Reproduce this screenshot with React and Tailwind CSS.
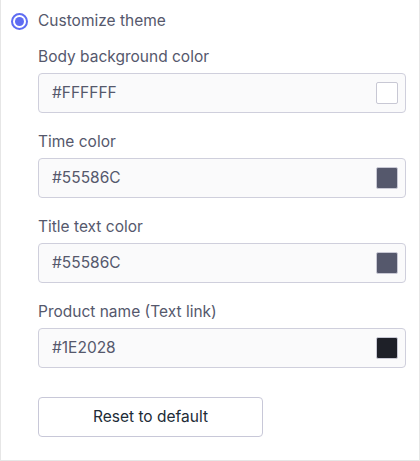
const fields = [
  { label: 'Body background color', value: '#FFFFFF', swatch: 'bg-[#FFFFFF]' },
  { label: 'Time color', value: '#55586C', swatch: 'bg-[#55586C]' },
  { label: 'Title text color', value: '#55586C', swatch: 'bg-[#55586C]' },
  { label: 'Product name (Text link)', value: '#1E2028', swatch: 'bg-[#1E2028]' },
];

function ColorField({ label, value, swatch }) {
  return (
    <div className="flex flex-col">
      <label className="text-[15.5px] leading-[22px] text-[#55586c] mb-[5px]">{label}</label>
      <div className="h-[40px] w-[368px] flex items-center justify-between pl-[13px] pr-[7px] rounded-[4px] border border-[#cfcfdc] bg-[#fafafb]">
        <span className="text-[15.5px] text-[#55586c]">{value}</span>
        <span className={`w-[22px] h-[22px] rounded-[2px] border border-[#c8c8d4] ${swatch}`} />
      </div>
    </div>
  );
}

export default function App() {
  return (
    <div
      className="w-[420px] h-[461px] bg-white border-x border-b border-[#e6e6e6] px-[10px] pt-[11px]"
      style={{ fontFamily: 'Inter, "Noto Sans", sans-serif' }}
    >
      <div className="flex items-center gap-[10px] h-[20px]">
        <span className="w-[17px] h-[17px] rounded-full border-2 border-[#5e6cf2] flex items-center justify-center">
          <span className="w-[9px] h-[9px] rounded-full bg-[#5e6cf2]" />
        </span>
        <span className="text-[15.5px] text-[#55586c]">Customize theme</span>
      </div>

      <div className="pl-[27px] mt-[15px] flex flex-col gap-[18px]">
        {fields.map((f) => (
          <ColorField key={f.label} {...f} />
        ))}
        <button className="mt-[11px] w-[225px] h-[40px] rounded-[4px] border border-[#c8c8d8] bg-white text-[15.5px] text-[#212b36]">
          Reset to default
        </button>
      </div>
    </div>
  );
}
